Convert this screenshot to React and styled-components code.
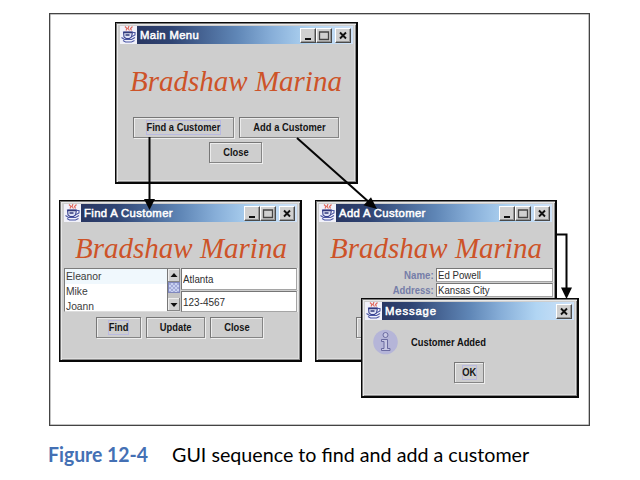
import React from "react";
import styled, { createGlobalStyle } from "styled-components";

const Global = createGlobalStyle`
  * { box-sizing: border-box; }
  body { margin: 0; background: #fff; }
`;

const Page = styled.main`
  width: 640px;
  height: 480px;
  padding: 13px 0 0 49px;
  overflow: hidden;
  background: #fff;
`;

const Canvas = styled.section`
  position: relative;
  width: 541px;
  height: 413px;
  border: 1px solid #444;
  box-shadow: inset 0 0 0 0.5px #888;
`;

const Caption = styled.p`
  display: flex;
  align-items: baseline;
  margin: 14px 0 0 -1px;
  font: 20px/28px Lato, sans-serif;
  color: #000;
  white-space: pre;
`;

const Fit = styled.span`
  display: inline-block;
  white-space: pre;
  transform: scaleX(${(p) => p.$x || 1});
  transform-origin: ${(p) => p.$from || "left"} center;
`;

const FigureNo = styled.span`
  width: 124px;
  font-weight: 700;
  color: #4470b4;
`;

const Frame = styled.article`
  position: absolute;
  left: ${(p) => p.$x}px;
  top: ${(p) => p.$y}px;
  width: ${(p) => p.$w}px;
  height: ${(p) => p.$h}px;
  display: flex;
  flex-direction: column;
  padding: 3px 2px 2px 3px;
  background: #cecece;
  border: solid #080808;
  border-width: 1px 2px 2px 1px;
  box-shadow: inset 1px 1px 0 #777, inset 2px 2px 0 #e8e8e8, inset -1px -1px 0 #8a8a8a,
    inset -2px -2px 0 #dedede;
  font-family: "Liberation Sans", Arial, sans-serif;
`;

const TitleBar = styled.header`
  display: flex;
  align-items: center;
  flex: none;
  height: 18px;
  margin: 0 1px 0 ${(p) => p.$inset || 0}px;
  padding-right: 2px;
  background: linear-gradient(90deg, #26305a 0%, #2f4473 22%, #5f86b6 50%, #87aed8 65%, #b1d5f3 82%, #cfe2f8 100%);
`;

const Title = styled.h2`
  flex: 1;
  margin: 0 0 0 3px;
  font-size: 11.3px;
  line-height: 18px;
  font-weight: 400;
  color: #fff;
  -webkit-text-stroke: 0.5px #fff;
  white-space: nowrap;
  letter-spacing: ${(p) => p.$track}px;
`;

const Control = styled.button`
  display: block;
  width: 16px;
  height: 15px;
  margin-left: ${(p) => (p.$gap ? 3 : 0)}px;
  padding: 0;
  border: 1px solid;
  border-color: #fff #4a4a4a #4a4a4a #fff;
  box-shadow: inset -1px -1px 0 #969696;
  background: #d0d0d0;
  svg { display: block; }
`;

const Brand = styled.h1`
  margin: ${(p) => p.$top}px 0 0 ${(p) => p.$left}px;
  font: italic 400 29px/34px "Liberation Serif", "Times New Roman", serif;
  color: #cd5328;
  white-space: nowrap;
`;

const Buttons = styled.div`
  display: flex;
  gap: ${(p) => p.$gap || 5}px;
  margin: ${(p) => p.$top}px 0 0 ${(p) => p.$left}px;
`;

const SwingButton = styled.button`
  display: flex;
  align-items: center;
  justify-content: center;
  flex: none;
  width: ${(p) => p.$w}px;
  height: 21px;
  padding: 0;
  border: 1px solid #777;
  border-right-color: #858585;
  border-bottom-color: #858585;
  box-shadow: inset 1px 1px 0 #ececec, 1px 1px 0 #eee;
  background: #cecece;
  color: #151515;
  font: 700 11px/13px "Liberation Sans", Arial, sans-serif;
`;

const FocusRing = styled.span`
  display: flex;
  justify-content: center;
  width: ${(p) => p.$w}px;
  height: 15px;
  border: 1px solid ${(p) => (p.$on ? "#b9b9df" : "transparent")};
`;

const CustomerRow = styled.div`
  display: flex;
  gap: 1px;
  height: 44px;
  margin: 3px 0 0 1px;
`;

const ListBox = styled.div`
  display: flex;
  width: 116px;
  border: 1px solid #7c7c7c;
  border-right: 0;
  border-bottom-color: #ddd;
  background: #fff;
`;

const Names = styled.ul`
  flex: 1;
  margin: 0;
  overflow: hidden;
  padding: 0;
  list-style: none;
`;

const Name = styled.li`
  height: 15px;
  padding-left: 1px;
  font-size: 10.5px;
  line-height: 15px;
  color: #3b3b3b;
  background: ${(p) => (p.$selected ? "#f0f8fd" : "#fff")};
`;

const Scrollbar = styled.div`
  display: flex;
  flex-direction: column;
  width: 13px;
  border-left: 1px solid #777;
  background: #c4c4c4;
`;

const ScrollArrow = styled.div`
  height: 13px;
  background: #d2d2d2;
  border: solid #888;
  border-width: 0 1px 1px 0;
  box-shadow: inset 1px 1px 0 #eee;
  svg { display: block; }
`;

const Thumb = styled.div`
  height: 11px;
  margin-bottom: auto;
  border: 1px solid #8088bd;
  background: repeating-conic-gradient(#c9d2f2 0 25%, #a3abd9 0 50%) 0 0 / 4px 4px;
`;

const Fields = styled.div`
  display: flex;
  flex-direction: column;
  gap: 1px;
  flex: none;
  width: 116px;
`;

const Field = styled.div`
  height: ${(p) => p.$h}px;
  padding-left: 1px;
  border: 1px solid #767676;
  border-right-color: #a5a5a5;
  border-bottom-color: #a5a5a5;
  box-shadow: 1px 0 0 #eee;
  background: #fff;
  font-size: 10.5px;
  line-height: ${(p) => p.$h - 1}px;
  color: #2e2e2e;
`;

const Form = styled.div`
  margin-top: 2px;
`;

const FormRow = styled.div`
  display: flex;
  align-items: center;
  justify-content: flex-end;
  height: 15px;
`;

const FormField = styled(Field)`
  width: 117px;
  margin-left: 2px;
`;

const Label = styled.label`
  font-size: 11px;
  font-weight: 700;
  line-height: 14px;
  color: #757da8;
`;

const MessageBody = styled.div`
  display: flex;
  align-items: center;
  gap: 13px;
  margin: 9px 0 0 8px;
  height: 26px;
  font-size: 11px;
  font-weight: 700;
  color: #111;
`;

const Links = styled.svg`
  position: absolute;
  left: -50px;
  top: -14px;
  pointer-events: none;
`;

const JavaIcon = () => (
  <svg width="17" height="18" viewBox="0 0 17 18">
    <path d="M0 0h17v18H0z" fill="#f1f1fa" />
    <path d="M5 0.5l2 2-1 2M9 0L8 2.5l1.5 2M12.5 0.5l-2 2 1 2" fill="none" stroke="#e06a5e" strokeWidth="1.2" />
    <path d="M3.5 6h9l-1 5-2 1.5H6L4 11z" fill="#dfe3f6" stroke="#39428f" strokeWidth="1.1" />
    <path d="M4 6.5h8M5.5 9h4" stroke="#313879" strokeWidth="1.3" />
    <path d="M12.5 6.5h2.5v2.5l-3 1.5M1.5 11.5l3 2h7l3.5-2M3 14.5l2.5 1.5h6l3-1.5" fill="none" stroke="#4a56a4" strokeWidth="1.1" />
  </svg>
);

const glyphs = {
  min: <path d="M4 10h6" stroke="#111" strokeWidth="2" />,
  max: <path d="M2.5 3h9v7.5h-9zM2 3h10" fill="none" stroke="#444" strokeWidth="1.3" />,
  close: <path d="M4 3.5l6 6M10 3.5l-6 6" stroke="#111" strokeWidth="1.9" />,
};

const WindowControl = ({ kind, gap }) => (
  <Control $gap={gap} aria-label={kind}>
    <svg width="14" height="13" viewBox="0 0 14 13">{glyphs[kind]}</svg>
  </Control>
);

const AppWindow = ({ x, y, w, h, title, track = 0.36, inset, dialog, children }) => (
  <Frame $x={x} $y={y} $w={w} $h={h}>
    <TitleBar $inset={inset}>
      <JavaIcon />
      <Title $track={track}>{title}</Title>
      {!dialog && <WindowControl kind="min" />}
      {!dialog && <WindowControl kind="max" />}
      <WindowControl kind="close" gap />
    </TitleBar>
    {children}
  </Frame>
);

const PushButton = ({ w, ring, focused, children }) => (
  <SwingButton $w={w}>
    <FocusRing $w={ring} $on={focused}>
      <Fit $x={0.85} $from="center">{children}</Fit>
    </FocusRing>
  </SwingButton>
);

const Arrow = ({ up }) => (
  <ScrollArrow>
    <svg width="12" height="12" viewBox="0 0 12 12">
      <path d={up ? "M2.5 8h7L6 4z" : "M2.5 5h7L6 9z"} fill="#111" />
    </svg>
  </ScrollArrow>
);

const InfoIcon = () => (
  <svg width="25" height="26" viewBox="0 0 25 26">
    <circle cx="12.5" cy="13" r="12.3" fill="#b5b5d8" />
    <g fill="#c9c9e4" stroke="#62629a" strokeWidth="0.9">
      <circle cx="12.5" cy="6" r="2.5" />
      <path d="M8.5 10.5h6v9H17v2H8.5v-2H11v-7H8.5z" />
    </g>
  </svg>
);

export default function App() {
  return (
    <Page>
      <Global />
      <Canvas>
        <AppWindow x={65} y={8} w={243} h={162} title="Main Menu" inset={1}>
          <Brand $top={20} $left={11}>Bradshaw Marina</Brand>
          <Buttons $top={19} $left={14}>
            <PushButton w={101} ring={75} focused>Find a Customer</PushButton>
            <PushButton w={100} ring={75}>Add a Customer</PushButton>
          </Buttons>
          <Buttons $top={4} $left={90}>
            <PushButton w={53} ring={30}>Close</PushButton>
          </Buttons>
        </AppWindow>

        <AppWindow x={9} y={186} w={243} h={162} title="Find A Customer" inset={1}>
          <Brand $top={9} $left={12}>Bradshaw Marina</Brand>
          <CustomerRow>
            <ListBox>
              <Names>
                {["Eleanor", "Mike", "Joann"].map((n, i) => (
                  <Name key={n} $selected={i === 0}><Fit $x={0.98}>{n}</Fit></Name>
                ))}
              </Names>
              <Scrollbar>
                <Arrow up />
                <Thumb />
                <Arrow />
              </Scrollbar>
            </ListBox>
            <Fields>
              <Field $h={22}><Fit $x={0.93}>Atlanta</Fit></Field>
              <Field $h={21}><Fit $x={0.95}>123-4567</Fit></Field>
            </Fields>
          </CustomerRow>
          <Buttons $top={5} $left={33}>
            <PushButton w={45} ring={21} focused>Find</PushButton>
            <PushButton w={59} ring={36}>Update</PushButton>
            <PushButton w={53} ring={30}>Close</PushButton>
          </Buttons>
        </AppWindow>

        <AppWindow x={265} y={186} w={242} h={162} title="Add A Customer">
          <Brand $top={9} $left={11}>Bradshaw Marina</Brand>
          <Form>
            <FormRow>
              <Label><Fit $x={0.88} $from="right">Name:</Fit></Label>
              <FormField $h={14}><Fit $x={0.92}>Ed Powell</Fit></FormField>
            </FormRow>
            <FormRow>
              <Label><Fit $x={0.86} $from="right">Address:</Fit></Label>
              <FormField $h={14}><Fit $x={0.92}>Kansas City</Fit></FormField>
            </FormRow>
          </Form>
          <Buttons $top={20} $left={37}>
            <PushButton w={53} ring={30} />
          </Buttons>
        </AppWindow>

        <AppWindow x={311} y={284} w={218} h={100} title="Message" track={0.85} dialog>
          <MessageBody>
            <InfoIcon />
            <Fit $x={0.85}>Customer Added</Fit>
          </MessageBody>
          <Buttons $top={7} $left={89}>
            <PushButton w={30} ring={15} focused>OK</PushButton>
          </Buttons>
        </AppWindow>

        <Links width="640" height="480" viewBox="0 0 640 480">
          <g fill="none" stroke="#050505" strokeWidth="2">
            <path d="M149.5 137v66" />
            <path d="M297 138l73 65" />
            <path d="M557 234.5h9.5V290" />
          </g>
          <g fill="#050505">
            <path d="M144 199h11l-5.5 11z" />
            <path d="M377 209l-13.5-3.8 7.5-8z" />
            <path d="M561 287.5h11l-5.5 11.5z" />
          </g>
        </Links>
      </Canvas>
      <Caption>
        <FigureNo><Fit $x={0.97}>Figure 12-4</Fit></FigureNo>
        <Fit $x={0.984}>GUI sequence to find and add a customer</Fit>
      </Caption>
    </Page>
  );
}
